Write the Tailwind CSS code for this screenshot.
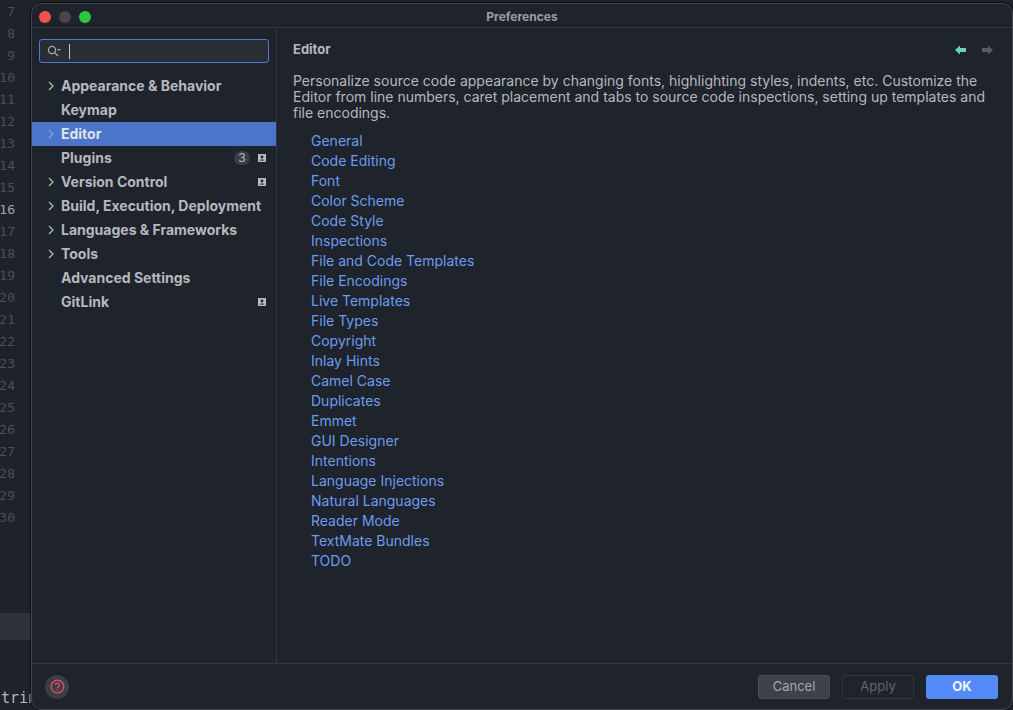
<!DOCTYPE html>
<html>
<head>
<meta charset="utf-8">
<script src="https://cdn.jsdelivr.net/npm/@tailwindcss/browser@4"></script>
</head>
<body class="w-[1013px] h-[710px] overflow-hidden relative bg-[#1e2229] font-['Inter','Liberation_Sans',sans-serif]">

<!-- editor behind the dialog -->
<div class="w-[32px] h-[710px] relative overflow-hidden font-['DejaVu_Sans_Mono',monospace] text-[13px] text-[#4b5059]">
  <div class="flex flex-col items-end w-[15px] pt-[1px] leading-[22px]">
    <span>7</span><span>8</span><span>9</span><span>10</span><span>11</span><span>12</span><span>13</span><span>14</span><span>15</span><span class="text-[#a0a4ab]">16</span><span>17</span><span>18</span><span>19</span><span>20</span><span>21</span><span>22</span><span>23</span><span>24</span><span>25</span><span>26</span><span>27</span><span>28</span><span>29</span><span>30</span>
  </div>
  <div class="absolute left-0 top-[613px] w-[32px] h-[27px] bg-[#2c313a]"></div>
  <div class="absolute left-[-8px] top-[687px] text-[#b4b7bc] text-[15px]">string</div>
</div>

<!-- preferences dialog -->
<div class="absolute left-[31px] top-[3px] w-[982px] h-[707px] rounded-tl-[10px] rounded-tr-[10px] rounded-b-[10px] bg-[#1f232b] border border-[#45484e] flex flex-col text-[#b5b8be] outline outline-black/60">
  <div class="h-[24px] shrink-0 flex items-center justify-center relative border-b border-[#33363d]">
    <div class="absolute left-[7px] top-[7px] flex gap-[8px]">
      <span class="w-[12px] h-[12px] rounded-full bg-[#f4504c]"></span>
      <span class="w-[12px] h-[12px] rounded-full bg-[#45474b]"></span>
      <span class="w-[12px] h-[12px] rounded-full bg-[#2cc840]"></span>
    </div>
    <span class="text-[12px] font-bold text-[#9b9ea4] relative top-[1px]">Preferences</span>
  </div>

  <div class="flex-1 flex min-h-0">
    <!-- sidebar -->
    <div class="w-[245px] shrink-0 border-r border-[#33363d] flex flex-col">
      <div class="mx-[7px] mt-[11px] h-[24px] rounded-[3px] border border-[#4d78cc] bg-[#292d36] flex items-center pl-[7px] shrink-0">
        <svg width="14" height="12" viewBox="0 0 14 12" fill="none" stroke="#a4a7ad" stroke-width="1.3"><circle cx="5" cy="5" r="3.6"/><path d="M7.6 7.6 11 11"/><path d="M10 4h4l-2 2z" fill="#a4a7ad" stroke="none"/></svg>
        <span class="ml-[8px] w-px h-[15px] bg-[#c5c8cd]"></span>
      </div>
      <div class="mt-[11px] text-[14px] font-bold leading-[24px]">
        <div class="h-[24px] flex items-center pl-[15px]"><svg class="w-[8px] h-[10px]" viewBox="0 0 8 10" fill="none" stroke="#b5b8be" stroke-width="1.3"><path d="M2 1l4 4-4 4"/></svg><span class="ml-[6px]">Appearance &amp; Behavior</span></div>
        <div class="h-[24px] flex items-center pl-[29px]">Keymap</div>
        <div class="h-[24px] flex items-center pl-[15px] bg-[#4b75c9] text-[#dfe3ea]"><svg class="w-[8px] h-[10px]" viewBox="0 0 8 10" fill="none" stroke="#7fa3e6" stroke-width="1.3"><path d="M2 1l4 4-4 4"/></svg><span class="ml-[6px]">Editor</span></div>
        <div class="h-[24px] flex items-center pl-[29px]">Plugins
          <span class="ml-auto w-[16px] h-[14px] rounded-full bg-[#3a3e46] text-[12px] font-normal flex items-center justify-center">3</span>
          <svg class="ml-[8px] mr-[10px] w-[8px] h-[8px]" viewBox="0 0 8 8"><path fill="#b5b8be" d="M0 0h8v8H0z"/><circle cx="4" cy="3" r="1.4" fill="#1f232b"/><path fill="#1f232b" d="M1.5 6.5c.3-1.4 4.7-1.4 5 0z"/></svg>
        </div>
        <div class="h-[24px] flex items-center pl-[15px]"><svg class="w-[8px] h-[10px]" viewBox="0 0 8 10" fill="none" stroke="#b5b8be" stroke-width="1.3"><path d="M2 1l4 4-4 4"/></svg><span class="ml-[6px]">Version Control</span>
          <svg class="ml-auto mr-[10px] w-[8px] h-[8px]" viewBox="0 0 8 8"><path fill="#b5b8be" d="M0 0h8v8H0z"/><circle cx="4" cy="3" r="1.4" fill="#1f232b"/><path fill="#1f232b" d="M1.5 6.5c.3-1.4 4.7-1.4 5 0z"/></svg>
        </div>
        <div class="h-[24px] flex items-center pl-[15px]"><svg class="w-[8px] h-[10px]" viewBox="0 0 8 10" fill="none" stroke="#b5b8be" stroke-width="1.3"><path d="M2 1l4 4-4 4"/></svg><span class="ml-[6px]">Build, Execution, Deployment</span></div>
        <div class="h-[24px] flex items-center pl-[15px]"><svg class="w-[8px] h-[10px]" viewBox="0 0 8 10" fill="none" stroke="#b5b8be" stroke-width="1.3"><path d="M2 1l4 4-4 4"/></svg><span class="ml-[6px]">Languages &amp; Frameworks</span></div>
        <div class="h-[24px] flex items-center pl-[15px]"><svg class="w-[8px] h-[10px]" viewBox="0 0 8 10" fill="none" stroke="#b5b8be" stroke-width="1.3"><path d="M2 1l4 4-4 4"/></svg><span class="ml-[6px]">Tools</span></div>
        <div class="h-[24px] flex items-center pl-[29px]">Advanced Settings</div>
        <div class="h-[24px] flex items-center pl-[29px]">GitLink
          <svg class="ml-auto mr-[10px] w-[8px] h-[8px]" viewBox="0 0 8 8"><path fill="#b5b8be" d="M0 0h8v8H0z"/><circle cx="4" cy="3" r="1.4" fill="#1f232b"/><path fill="#1f232b" d="M1.5 6.5c.3-1.4 4.7-1.4 5 0z"/></svg>
        </div>
      </div>
    </div>

    <!-- content -->
    <div class="flex-1 min-w-0 pl-[16px] pr-[16px] pt-[14px]">
      <div class="flex items-center justify-between h-[16px]">
        <span class="text-[13px] font-bold">Editor</span>
        <div class="flex gap-[14px] items-center mr-[3px]">
          <svg width="12" height="10" viewBox="0 0 12 10"><path fill="#6dcfc4" d="M0 5l5-4.5V3h6v4H5v2.500z"/></svg>
          <svg width="12" height="10" viewBox="0 0 12 10"><path fill="#5a5c60" d="M12 5L7 .5V3H1v4h6v2.500z"/></svg>
        </div>
      </div>
      <p class="mt-[15px] text-[14px] leading-[16px] w-[710px]">Personalize source code appearance by changing fonts, highlighting styles, indents, etc. Customize the Editor from line numbers, caret placement and tabs to source code inspections, setting up templates and file encodings.</p>
      <div class="mt-[10px] pl-[18px] flex flex-col items-start text-[14px] leading-[20px] text-[#6c9cf0]">
        <a>General</a><a>Code Editing</a><a>Font</a><a>Color Scheme</a><a>Code Style</a><a>Inspections</a><a>File and Code Templates</a><a>File Encodings</a><a>Live Templates</a><a>File Types</a><a>Copyright</a><a>Inlay Hints</a><a>Camel Case</a><a>Duplicates</a><a>Emmet</a><a>GUI Designer</a><a>Intentions</a><a>Language Injections</a><a>Natural Languages</a><a>Reader Mode</a><a>TextMate Bundles</a><a>TODO</a>
      </div>
    </div>
  </div>

  <!-- footer -->
  <div class="h-[46px] shrink-0 border-t border-[#33363d] flex items-center pl-[13px] pr-[14px]">
    <div class="w-[24px] h-[24px] rounded-full bg-[#3a3e46] flex items-center justify-center">
      <svg width="15" height="15" viewBox="0 0 15 15" fill="none" stroke="#ee4a66" stroke-width="1.3"><circle cx="7.5" cy="7.5" r="6.3"/><path d="M5.500 6c0-2.600 4-2.600 4 0 0 1.500-2 1.500-2 3.200"/><path d="M7.500 10.400v1.300"/></svg>
    </div>
    <div class="ml-auto flex gap-[12px] text-[13px]">
      <button class="w-[72px] h-[24px] rounded-[3px] bg-[#3c414b] border border-[#474c56] text-[#a4a7ad]">Cancel</button>
      <button class="w-[72px] h-[24px] rounded-[3px] border border-[#33363d] text-[#62656b]">Apply</button>
      <button class="w-[72px] h-[24px] rounded-[3px] bg-[#548af7] text-[#eef2fa] font-bold">OK</button>
    </div>
  </div>
</div>
</body>
</html>
